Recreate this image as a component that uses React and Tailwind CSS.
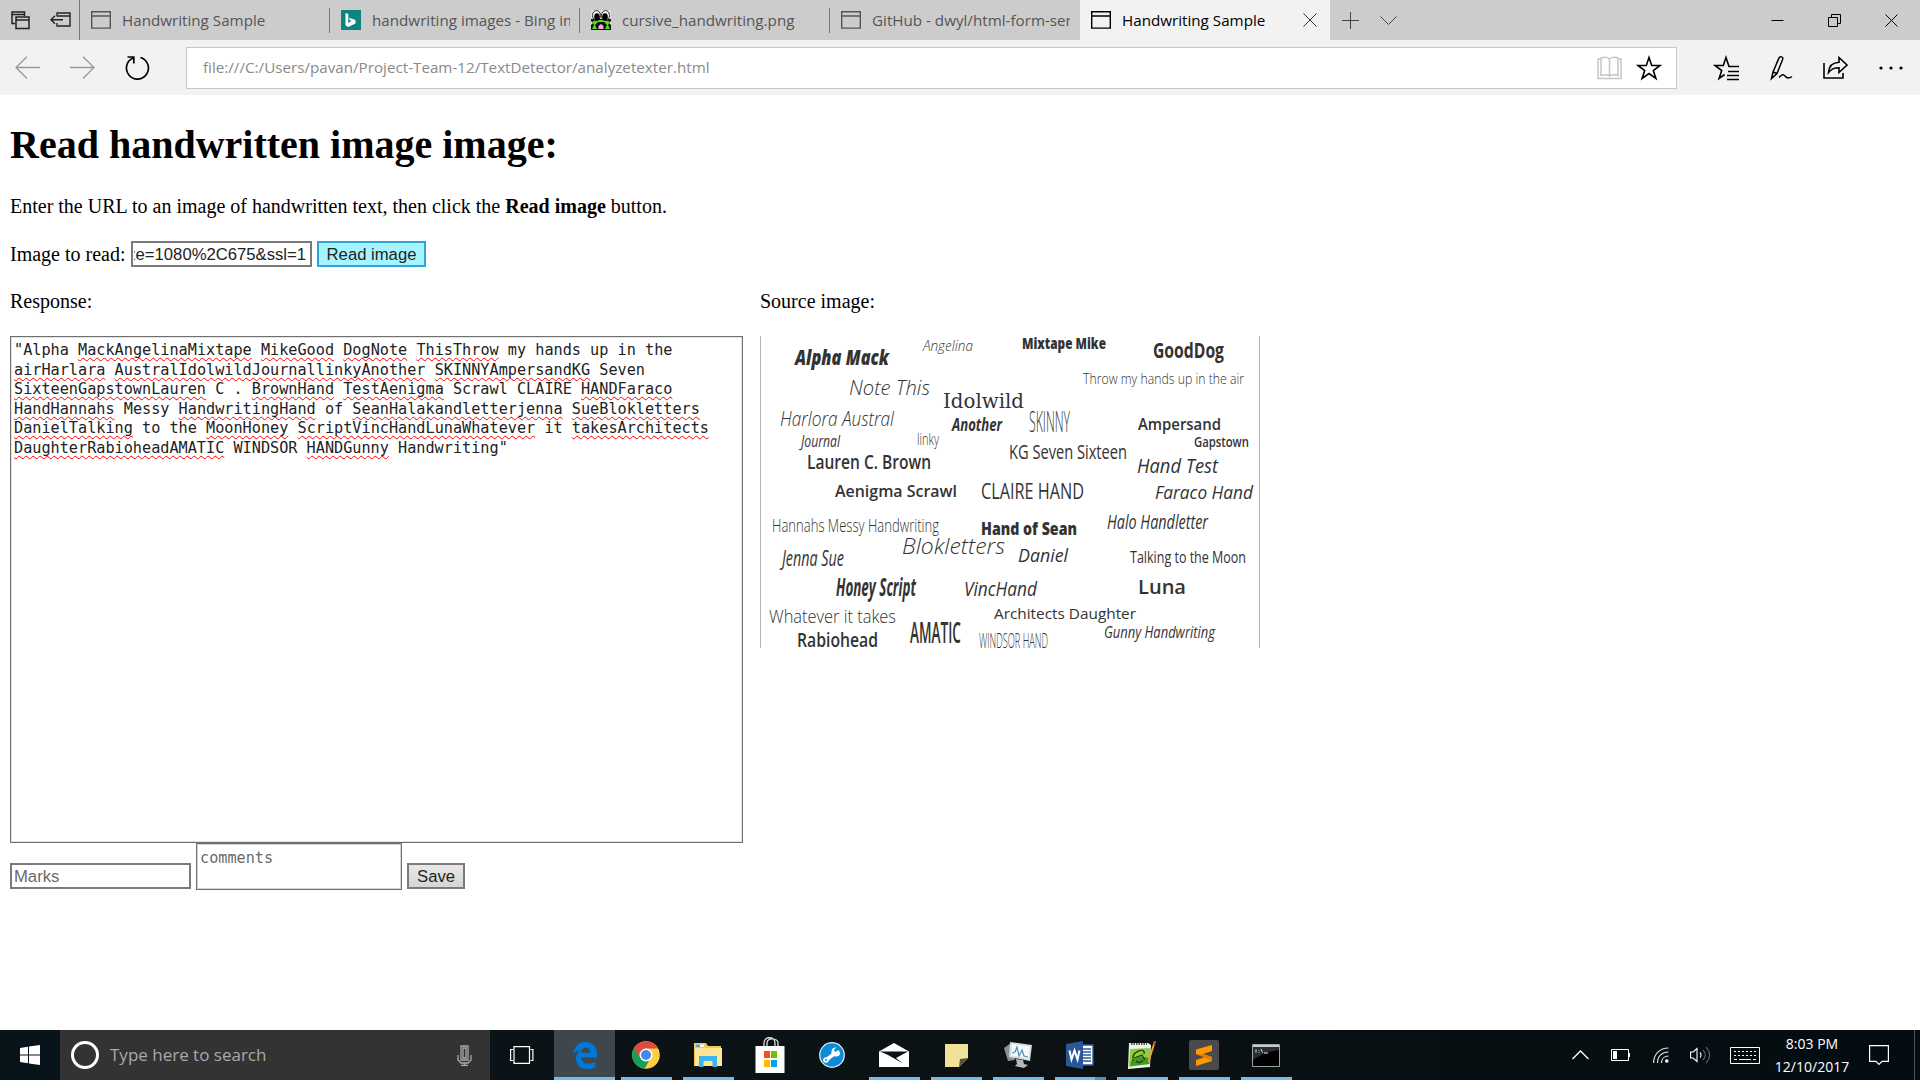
const ink = "#333";

const samples = [
  ["Alpha Mack", 35, 29, 94, 21, 800, "italic", "Open Sans"],
  ["Angelina", 163, 15, 50, 15, 300, "italic", "Open Sans"],
  ["Mixtape Mike", 262, 13, 84, 15, 800, "normal", "Open Sans"],
  ["GoodDog", 393, 22, 71, 21, 700, "normal", "Open Sans"],
  ["Throw my hands up in the air", 323, 48, 161, 15, 300, "normal", "Open Sans"],
  ["Note This", 89, 59, 81, 20, 300, "italic", "Open Sans"],
  ["Idolwild", 183, 72, 81, 21, 400, "normal", "DejaVu Serif"],
  ["Harlora Austral", 20, 90, 114, 20, 300, "italic", "Open Sans"],
  ["Another", 192, 95, 50, 18, 700, "italic", "Open Sans"],
  ["SKINNY", 269, 96, 41, 30, 300, "normal", "Open Sans"],
  ["Ampersand", 378, 94, 83, 16, 600, "normal", "Open Sans"],
  ["Journal", 41, 111, 39, 17, 400, "italic", "Open Sans"],
  ["linky", 157, 109, 22, 16, 300, "normal", "Open Sans"],
  ["KG Seven Sixteen", 249, 123, 118, 20, 400, "normal", "Open Sans"],
  ["Gapstown", 434, 111, 55, 15, 600, "normal", "Open Sans"],
  ["Lauren C. Brown", 47, 133, 124, 19, 600, "normal", "Open Sans"],
  ["Hand Test", 377, 137, 81, 20, 400, "italic", "Open Sans"],
  ["Aenigma Scrawl", 75, 161, 122, 17, 600, "normal", "Open Sans"],
  ["CLAIRE HAND", 221, 163, 103, 22, 400, "normal", "Open Sans"],
  ["Faraco Hand", 395, 163, 98, 18, 400, "italic", "Open Sans"],
  ["Hannahs Messy Handwriting", 12, 196, 167, 18, 300, "normal", "Open Sans"],
  ["Hand of Sean", 221, 199, 96, 17, 800, "normal", "Open Sans"],
  ["Halo Handletter", 347, 193, 101, 20, 400, "italic", "Open Sans"],
  ["Blokletters", 142, 218, 103, 22, 300, "italic", "Open Sans"],
  ["Daniel", 258, 226, 50, 19, 400, "italic", "Open Sans"],
  ["Jenna Sue", 22, 230, 62, 21, 400, "italic", "Open Sans"],
  ["Talking to the Moon", 370, 227, 116, 17, 400, "normal", "Open Sans"],
  ["Honey Script", 76, 260, 80, 25, 700, "italic", "Open Sans"],
  ["VincHand", 204, 260, 73, 20, 400, "italic", "Open Sans"],
  ["Luna", 378, 258, 48, 19, 600, "normal", "Open Sans"],
  ["Whatever it takes", 9, 287, 127, 19, 300, "normal", "Open Sans"],
  ["Architects Daughter", 234, 283, 142, 15, 400, "normal", "Open Sans"],
  ["AMATIC", 150, 307, 51, 28, 600, "normal", "Open Sans"],
  ["Gunny Handwriting", 344, 302, 111, 16, 400, "italic", "Open Sans"],
  ["Rabiohead", 37, 311, 81, 19, 600, "normal", "Open Sans"],
  ["WINDSOR HAND", 219, 312, 69, 20, 300, "normal", "Open Sans"],
];

function SourceImage() {
  return (
    <svg width="500" height="312" viewBox="0 0 500 312" className="block overflow-hidden">
      <path d="M.5 0v312M499.5 0v312" stroke="#b4b4b4" />
      {samples.map(([text, x, y, width, size, weight, style, family]) => (
        <text
          key={text}
          x={x}
          y={y}
          textLength={width}
          lengthAdjust="spacingAndGlyphs"
          fontSize={size}
          fontWeight={weight}
          fontStyle={style}
          fontFamily={`"${family}", sans-serif`}
          fill={ink}
        >
          {text}
        </text>
      ))}
    </svg>
  );
}

function Svg({ w, h, className = "", children, stroke = "currentColor", sw = 1 }) {
  return (
    <svg
      width={w}
      height={h}
      viewBox={`0 0 ${w} ${h}`}
      fill="none"
      stroke={stroke}
      strokeWidth={sw}
      className={`block shrink-0 ${className}`}
    >
      {children}
    </svg>
  );
}

function PageIcon() {
  return (
    <Svg w={20} h={18} sw={1.4}>
      <path d="M.7 .7h18.6v16.4H.7zM.7 5h18.6" />
    </Svg>
  );
}

function BingIcon() {
  return (
    <Svg w={20} h={20} stroke="none">
      <path d="M0 0h20v20H0z" fill="#0c8484" />
      <path d="M4.5 3l2.800 1v9l3.300-1.900-1.700-.8-1-2.500 6.600 2.300v3.300L7.300 17l-2.800-1.600z" fill="#fff" />
    </Svg>
  );
}

function FrogIcon() {
  return (
    <Svg w={20} h={20} stroke="none">
      <path d="M0 0h20v20H0z" fill="#ddd" />
      <path d="M0 9h20v2l-2 2 2 2v5H0v-5l2-2-2-2z" fill="#111" />
      <path d="M1 12l4-2h10l4 2-2 3 2 4H1l2-4z" fill="#4ee01c" />
      <ellipse cx="5.500" cy="5.500" rx="4" ry="5" fill="#eee" stroke="#333" />
      <ellipse cx="14.500" cy="5.500" rx="4" ry="5" fill="#eee" stroke="#333" />
      <ellipse cx="6" cy="7" rx="2.800" ry="3.800" fill="#000" />
      <ellipse cx="14" cy="7" rx="2.800" ry="3.800" fill="#000" />
      <path d="M4 15l3-3h6l3 3-2 4H6z" fill="#111" />
      <path d="M7.500 19v-3l2.500-2 2.500 2v3z" fill="#f9a8d8" />
    </Svg>
  );
}

function Tab({ icon, label, active, divider }) {
  return (
    <div
      className={`relative flex h-10 w-[250px] shrink-0 items-center ${
        active ? "bg-[#f2f2f2] text-black" : "text-[#555]"
      }`}
    >
      <div className="flex w-[42px] justify-center pb-px">{icon}</div>
      <div className="w-[198px] overflow-hidden text-[15.2px] whitespace-nowrap">{label}</div>
      {active && (
        <Svg w={14} h={14} className="absolute right-[13px]" stroke="#333">
          <path d="M.5 .5l13 13M13.500 .5l-13 13" />
        </Svg>
      )}
      {divider && <div className="absolute right-0 h-[25px] w-px bg-[#777]" />}
    </div>
  );
}

function TabStrip() {
  return (
    <div className="flex h-10 bg-[#ccc]">
      <div className="flex w-20 items-center gap-5 border-r border-[#777] pl-[11px] text-[#222]">
        <Svg w={19} h={19} sw={1.5}>
          <path d="M4 12.500H1V1h12.500v4M1 3.500h12.500M5 6h13v11.500H5zM5 9h13" />
        </Svg>
        <Svg w={21} h={18} sw={1.4}>
          <path d="M7 5.500V2h13v13H7v-3M7 5h13M1 8.800h12M5 4.800L1 8.800l4 4" />
        </Svg>
      </div>
      <Tab icon={<PageIcon />} label="Handwriting Sample" divider />
      <Tab icon={<BingIcon />} label="handwriting images - Bing images" divider />
      <Tab icon={<FrogIcon />} label="cursive_handwriting.png" divider />
      <Tab icon={<PageIcon />} label="GitHub - dwyl/html-form-send" />
      <Tab icon={<PageIcon />} label="Handwriting Sample" active />
      <div className="flex items-center gap-[21px] pl-3 text-[#444]">
        <Svg w={17} h={17}>
          <path d="M8.500 0v17M0 8.500h17" />
        </Svg>
        <Svg w={17} h={9}>
          <path d="M.5 .5l8 8 8-8" />
        </Svg>
      </div>
      <div className="ml-auto flex items-center gap-11 pr-[22px] text-black">
        <Svg w={13} h={13}>
          <path d="M.5 6.500h12" />
        </Svg>
        <Svg w={13} h={13}>
          <path d="M.5 3.500h9v9h-9zM3.500 3.500v-3h9v9h-3" />
        </Svg>
        <Svg w={13} h={13}>
          <path d="M.5 .5l12 12M12.500 .5l-12 12" />
        </Svg>
      </div>
    </div>
  );
}

function Toolbar() {
  return (
    <div className="flex h-[55px] items-center bg-[#f2f2f2] pt-[1px] pr-[17px] pb-[1px] pl-[15px]">
      <Svg w={25} h={24} stroke="#999" sw={1.3}>
        <path d="M25 11.500H1M12 .8L1 11.500l11 11" />
      </Svg>
      <Svg w={25} h={24} stroke="#999" sw={1.3} className="ml-[30px]">
        <path d="M0 11.500h24M13 .8l11 10.700-11 11" />
      </Svg>
      <Svg w={26} h={26} stroke="#000" sw={1.7} className="ml-[30px]">
        <path d="M15.500 2.500a11 11 0 1 1-7.500.5M2.500 2h6.300v6.500" />
      </Svg>
      <div className="ml-[35px] flex h-[42px] w-[1491px] items-center border border-[#c8c8c8] bg-white pr-[14px] pl-4">
        <span className="text-[15.2px] whitespace-nowrap text-[#8a8a8a]">
          file:///C:/Users/pavan/Project-Team-12/TextDetector/analyzetexter.html
        </span>
        <Svg w={25} h={24} stroke="#c6c6c6" sw={1.5} className="ml-auto">
          <path d="M4 3H1v19.500h23V3h-3M12.500 3v17M12.500 3C10 1 7 1 4 2v17.500c3-1 6-1 8.500.5 2.500-1.500 5.500-1.500 8.500-.5V2c-3-1-6-1-8.500 1zM10 22.500h5" />
        </Svg>
        <Svg w={26} h={26} stroke="#000" sw={1.6} className="ml-[14px]">
          <path d="M13 2.500l2.700 8h8.300l-6.700 5 2.600 8L13 18.600 6.100 23.500l2.600-8L2 10.500h8.300z" />
        </Svg>
      </div>
      <Svg w={28} h={26} stroke="#000" sw={1.6} className="ml-9">
        <path d="M26 11.500H16l-3-9-2.700 8H2l6.700 5-2.600 8 5.500-4M15 16.500h11M14 20.500h12M14 24.500h12" />
      </Svg>
      <Svg w={24} h={26} stroke="#000" sw={1.5} className="ml-[29px]">
        <path d="M1.500 23.500L3 17 9 3c1-2.200 4.500-1.200 3.700 1.200L7 18.500l-5.500 5zM8 5l-2 5M3 17l4 1.500M9 22.500c3-3.500 4.500-3.500 6-1.500s3.500 3 7 .5" />
      </Svg>
      <Svg w={27} h={26} stroke="#000" sw={1.6} className="ml-[28px]">
        <path d="M2 8v15h19v-5M6.500 17.500C7 11 11 7.500 17 7.200V2.500l8 7.500-8 7.500v-4.800c-5 0-8 1.300-10.500 4.800z" />
      </Svg>
      <svg width="24" height="4" viewBox="0 0 24 4" className="ml-auto block">
        <circle cx="2" cy="2" r="1.600" />
        <circle cx="12" cy="2" r="1.600" />
        <circle cx="22" cy="2" r="1.600" />
      </svg>
    </div>
  );
}

/* Words wrapped in underscores are flagged by the spell checker. */
const response = [
  '"Alpha _MackAngelinaMixtape_ _MikeGood_ _DogNote_ _ThisThrow_ my hands up in the',
  "_airHarlara_ _AustralIdolwildJournallinkyAnother_ _SKINNYAmpersandKG_ Seven",
  "_SixteenGapstownLauren_ C . _BrownHand_ _TestAenigma_ Scrawl CLAIRE _HANDFaraco_",
  "_HandHannahs_ Messy _HandwritingHand_ of _SeanHalakandletterjenna_ _SueBlokletters_",
  "_DanielTalking_ to the _MoonHoney_ _ScriptVincHandLunaWhatever_ it _takesArchitects_",
  '_DaughterRabioheadAMATIC_ WINDSOR _HANDGunny_ Handwriting"',
];

function ResponseText() {
  return response.map((line) => (
    <div key={line} className="h-[19.53px] whitespace-pre">
      {line.split("_").map((part, i) =>
        i % 2 ? (
          <span
            key={i}
            className="underline decoration-[#f00] decoration-wavy decoration-[1px] underline-offset-[2px] [text-decoration-skip-ink:none]"
          >
            {part}
          </span>
        ) : (
          part
        )
      )}
    </div>
  ));
}

function Page() {
  return (
    <main className="h-[935px] bg-white pl-[10px] font-['Liberation_Serif',serif] text-[20px] leading-[23px] text-black">
      <h1 className="pt-[27px] text-[40px] leading-[46px] font-bold">Read handwritten image image:</h1>
      <p className="mt-[27px]">
        Enter the URL to an image of handwritten text, then click the <b>Read image</b> button.
      </p>
      <div className="mt-[23px] flex h-[26px] items-center font-['Liberation_Sans',sans-serif] text-[16.67px]">
        <span className="w-[121px] font-['Liberation_Serif',serif] text-[20px]">Image to read:</span>
        <div className="flex h-[26px] w-[181px] items-center justify-end overflow-hidden border-2 border-[#7a7a7a] pr-[4px] pt-px whitespace-nowrap text-[#222]">
          <span className="flex w-[172px] justify-end overflow-hidden">resize=1080%2C675&amp;ssl=1</span>
        </div>
        <button className="ml-[5px] h-[26px] w-[109px] border-2 border-[#2fa4dc] bg-[#a6f4ff] pt-px leading-[20px] text-[#222]">
          Read image
        </button>
      </div>
      <div className="mt-[23px] flex">
        <section className="w-[750px]">
          <p>Response:</p>
          <div className="mt-[23px] h-[507px] w-[733px] border border-[#707070] pt-[4px] pl-[3px] font-['DejaVu_Sans_Mono',monospace] text-[15.2px] leading-[19.53px] text-[#222] shadow-[inset_0_0_0_1px_#e2e2e2]">
            <ResponseText />
          </div>
          <div className="flex h-[47px] font-['Liberation_Sans',sans-serif] text-[16.67px] leading-[22px]">
            <div className="mt-5 h-[26px] w-[181px] border-2 border-[#7a7a7a] pt-px pl-[2px] text-[#6a6a6a]">Marks</div>
            <div className="ml-[5px] h-[47px] w-[206px] border border-[#707070] pt-[4px] pl-[3px] font-['DejaVu_Sans_Mono',monospace] text-[15.2px] leading-[20px] text-[#6a6a6a] shadow-[inset_0_0_0_1px_#d5d5d5]">
              comments
            </div>
            <button className="mt-5 ml-[5px] h-[26px] w-[58px] border-2 border-[#7a7a7a] bg-gradient-to-b from-[#e8e8e8] to-[#d6d6d6] pt-px leading-[20px] text-[#222]">
              Save
            </button>
          </div>
        </section>
        <section>
          <p>Source image:</p>
          <div className="mt-[23px]">
            <SourceImage />
          </div>
        </section>
      </div>
    </main>
  );
}

function Chrome() {
  return (
    <svg width="28" height="28" viewBox="0 0 28 28">
      <circle cx="14" cy="14" r="13.800" fill="#ffcd40" />
      <path d="M14 14L2 7A13.800 13.800 0 0 0 12.500 27.700l6-10.500z" fill="#12a05c" />
      <path d="M2 7A13.800 13.800 0 0 1 26 7.600H14v6.400L8 17.500z" fill="#de4b3c" />
      <circle cx="14" cy="14" r="6.500" fill="#fff" />
      <circle cx="14" cy="14" r="5" fill="#4587f3" />
    </svg>
  );
}

function Explorer() {
  return (
    <svg width="28" height="24" viewBox="0 0 28 24">
      <path d="M0 0h12l2 3h13v20H0z" fill="#f3c755" />
      <path d="M1 5h27v18H1z" fill="#ffe695" />
      <path d="M2 1.500h8V4H2z" fill="#fff" />
      <path d="M2 1.500h4V4H2z" fill="#3daee0" />
      <path d="M5 24V13h18v11h-4.500v-6h-9v6z" fill="#3cb4ec" />
    </svg>
  );
}

function Store() {
  return (
    <svg width="30" height="36" viewBox="0 0 30 36">
      <path d="M9 10V6c0-7 11-7 11 0v4M12 10V6c0-6 11-5 11 0v4" fill="none" stroke="#ddd" strokeWidth="1.300" />
      <path d="M.500 9h29v27H.500z" fill="#fff" />
      <path d="M9 14h6v7H9z" fill="#f25022" />
      <path d="M16 14h6v7h-6z" fill="#7fba00" />
      <path d="M9 23h6v7H9z" fill="#ffb900" />
      <path d="M16 23h6v7h-6z" fill="#00a4ef" />
    </svg>
  );
}

function Wrench() {
  return (
    <svg width="26" height="26" viewBox="0 0 26 26">
      <circle cx="13" cy="13" r="12.300" fill="#0d8bd9" stroke="#dceefa" strokeWidth="1.200" />
      <path d="M6.500 18.500L15 12" stroke="#fff" strokeWidth="3.500" strokeLinecap="round" />
      <path d="M19.500 8l-3 2-1.700-2 2.500-2.500a4.500 4.500 0 1 0 4 5.500z" fill="#fff" />
      <circle cx="7" cy="18" r="2.800" fill="#fff" />
      <circle cx="7" cy="18" r="1" fill="#0d8bd9" />
    </svg>
  );
}

function Mail() {
  return (
    <svg width="30" height="24" viewBox="0 0 30 24">
      <path d="M15 0l15 8.500V24H0V8.500z" fill="#fff" />
      <path d="M1 8.500h28L17 15l7 5.500L9 12z" fill="#0a1216" />
    </svg>
  );
}

function Notes() {
  return (
    <svg width="23" height="23" viewBox="0 0 23 23">
      <path d="M0 0h23v14l-9 9H0z" fill="#f0e399" />
      <path d="M14 23l1-8 8-1z" fill="#55523c" />
    </svg>
  );
}

function Monitor() {
  return (
    <svg width="28" height="26" viewBox="0 0 28 26">
      <path d="M0 6l7-5 4 17-7 1z" fill="#8b8f92" />
      <path d="M6 0l22 3-2 16L5 15z" fill="#d8dcde" />
      <path d="M8 2l18 2.500-1.500 12L7 13.500z" fill="#f4fafc" />
      <path d="M8 11l3-1 2-5 2 9 3-6 2 6 4 1" fill="none" stroke="#4b8fb8" strokeWidth="1.200" />
      <path d="M12 17l7 1 1 4 4 1-4 3-9-2 2-2z" fill="#b5b8ba" />
    </svg>
  );
}

function Word() {
  return (
    <svg width="28" height="28" viewBox="0 0 28 28">
      <path d="M14 4h13v20H14z" fill="#fff" stroke="#2b579a" strokeWidth="1.400" />
      <path d="M17 8h8M17 11h8M17 14h8M17 17h8M17 20h8" stroke="#2b579a" strokeWidth="1.500" />
      <path d="M0 3l17-3v28L0 25z" fill="#2b579a" />
      <path d="M3.500 9.500l2 9 3-9 3 9 2-9" fill="none" stroke="#fff" strokeWidth="2" />
    </svg>
  );
}

function Notepad() {
  return (
    <svg width="29" height="28" viewBox="0 0 29 28">
      <path d="M1 2h19l3 2-1 22L0 28z" fill="#f2f4ee" />
      <path d="M2 8l20-1v16L1 26z" fill="#8fd13c" />
      <path d="M3 20l8-5 10 2v6L2 25z" fill="#3f9d22" />
      <path d="M3 3h16" stroke="#555" strokeWidth="2" strokeDasharray="1.500 1" />
      <path d="M5 20c-1-7 2-9 6-10 3-2 6 0 5 3M6 17l8-3 3 5M8 20c3 3 6 1 7-1" fill="none" stroke="#26401d" strokeWidth="1.300" />
      <path d="M28 0l-6 19-2 3V19L26 0z" fill="#f0a030" />
      <path d="M28 0l-1 4-2-.6L26 0z" fill="#c2413a" />
    </svg>
  );
}

function Sublime() {
  return (
    <svg width="30" height="30" viewBox="0 0 30 30">
      <rect width="30" height="30" rx="2" fill="#4a4a4a" />
      <path d="M23 5v6l-9 3 9 3v4L7 26v-6l9-3-9-3V9.500z" fill="#ff9800" />
      <path d="M14 14l9 3v4L7 14z" fill="#e08000" />
    </svg>
  );
}

function Terminal() {
  return (
    <svg width="28" height="23" viewBox="0 0 28 23">
      <path d="M.500 .500h27v22H.500z" fill="#000" stroke="#9aa3a8" />
      <path d="M1 1h26v2H1z" fill="#c5ccd0" />
      <path d="M1 3h26v3C18 7 8 11 1 16z" fill="#2c2f31" />
      <path d="M4 5.500v3M7 6v.8M7 8v.8M9 5l1.500 3.500M12 9h4" stroke="#ddd" fill="none" />
    </svg>
  );
}

const apps = [
  [Chrome, true],
  [Explorer, true],
  [Store, false],
  [Wrench, false],
  [Mail, true],
  [Notes, true],
  [Monitor, true],
  [Word, true],
  [Notepad, true],
  [Sublime, true],
  [Terminal, true],
];

function Taskbar() {
  return (
    <div className="flex h-[50px] bg-gradient-to-r from-[#07141a] via-[#0c1214] to-[#030c10] text-white">
      <div className="flex w-[60px] items-center justify-center">
        <svg width="20" height="20" viewBox="0 0 20 20" fill="#fff">
          <path d="M0 3l8-1.200v7.700H0zM9 1.600L20 0v9.500H9zM0 10.500h8v7.700L0 17zM9 10.500h11V20L9 18.400z" />
        </svg>
      </div>
      <div className="flex w-[430px] items-center bg-[#333] pr-[18px] pl-[11px]">
        <div className="h-7 w-7 rounded-full border-[3.500px] border-white" />
        <span className="ml-[11px] text-[17px] text-[#a9a9a9]">Type here to search</span>
        <Svg w={15} h={21} stroke="#aaa" sw={1.3} className="ml-auto">
          <path d="M4 1h7v14H4zM6 3h3v10H6zM1 10v5l3 3h7l3-3v-5M7.500 18v2.500M4 20.300h7" />
        </Svg>
      </div>
      <div className="flex w-16 items-center justify-center">
        <Svg w={24} h={18} stroke="#fff" sw={1.2}>
          <path d="M4 .6h15.500v16.800H4zM3 3.500H.6v11H3M20.500 3.500h2.400v11h-2.400" />
        </Svg>
      </div>
      <div className="relative flex w-[61px] items-center justify-center bg-[#3d474c]">
        <svg width="24" height="27" viewBox="0 0 24 27">
          <path
            d="M0 12C1 4.500 6 0 12.500 0 20 0 24 5.500 24 12v3.500H8c.3 4 3.500 6 8 6 2.500 0 4.700-.8 6.500-1.800v5.400c-2.200 1.200-5 1.900-8 1.900-7 0-11.500-4-11.500-10.500 0-4 2-7.300 5.500-9C5 8.500 2 9.500 0 12zM8.300 10.700h8.500c0-3.500-1.500-5.200-4-5.200-2.400 0-4 1.900-4.500 5.200z"
            fill="#0078d7"
          />
        </svg>
        <div className="absolute inset-x-0 bottom-0 h-[3px] bg-[#76b9ed]" />
      </div>
      {apps.map(([Icon, running], i) => (
        <div key={i} className="relative flex w-[62px] items-center justify-center">
          <Icon />
          {running && <div className="absolute bottom-0 h-[3px] w-[51px] bg-[#76b9ed]" />}
          {Icon === Word && <div className="absolute right-[5px] bottom-0 h-[3px] w-[11px] bg-[#5a8db5]" />}
        </div>
      ))}
      <div className="ml-auto flex items-center">
        <Svg w={17} h={10} stroke="#fff" sw={1.3}>
          <path d="M.5 9l8-8 8 8" />
        </Svg>
        <Svg w={20} h={12} stroke="#fff" className="ml-[22px]">
          <path d="M.5 .5h17v11H.5zM18.500 4v4" />
          <path d="M2 2h4v8H2z" fill="#fff" stroke="none" />
        </Svg>
        <Svg w={16} h={16} stroke="#ddd" sw={1.2} className="ml-[22px]">
          <path d="M.6 16C.6 7 7 1 15.500 1M4.500 16C4.500 9 9 5 15.500 5M8.500 16c0-4.500 3-7 7-7" />
          <circle cx="13.800" cy="14" r="1.800" fill="#fff" stroke="none" />
        </Svg>
        <Svg w={21} h={18} stroke="#fff" sw={1.1} className="ml-[21px]">
          <path d="M.6 6h2.600L7 2.500v13L3.200 12H.6zM10 6.500c1.300 1.300 1.300 3.700 0 5" />
          <path d="M13 4c3 3 3 7 0 10M16 1c4.500 5 4.500 11 0 16" stroke="#666" />
        </Svg>
        <Svg w={30} h={17} stroke="#fff" className="ml-[19px]">
          <path d="M.5 .5h29v16H.5z" />
          <path d="M4 4.500h22M4 8.500h22" strokeDasharray="2 2" />
          <path d="M4 12.500h3M9 12.500h12M23 12.500h3" />
        </Svg>
        <div className="ml-[11px] w-[82px] text-center text-[14px] leading-[23px] whitespace-nowrap">
          <div>8:03 PM</div>
          <div>12/10/2017</div>
        </div>
        <Svg w={20} h={20} stroke="#fff" sw={1.2} className="ml-4">
          <path d="M.6 .6h18.800v15.800H13l-3 3-3-3H.6z" />
        </Svg>
        <div className="ml-[25px] h-[50px] w-[6px] border-l border-[#4d565a]" />
      </div>
    </div>
  );
}

export default function App() {
  return (
    <div className="flex h-[1080px] w-[1920px] flex-col overflow-hidden font-['Open_Sans',sans-serif]">
      <TabStrip />
      <Toolbar />
      <Page />
      <Taskbar />
    </div>
  );
}
